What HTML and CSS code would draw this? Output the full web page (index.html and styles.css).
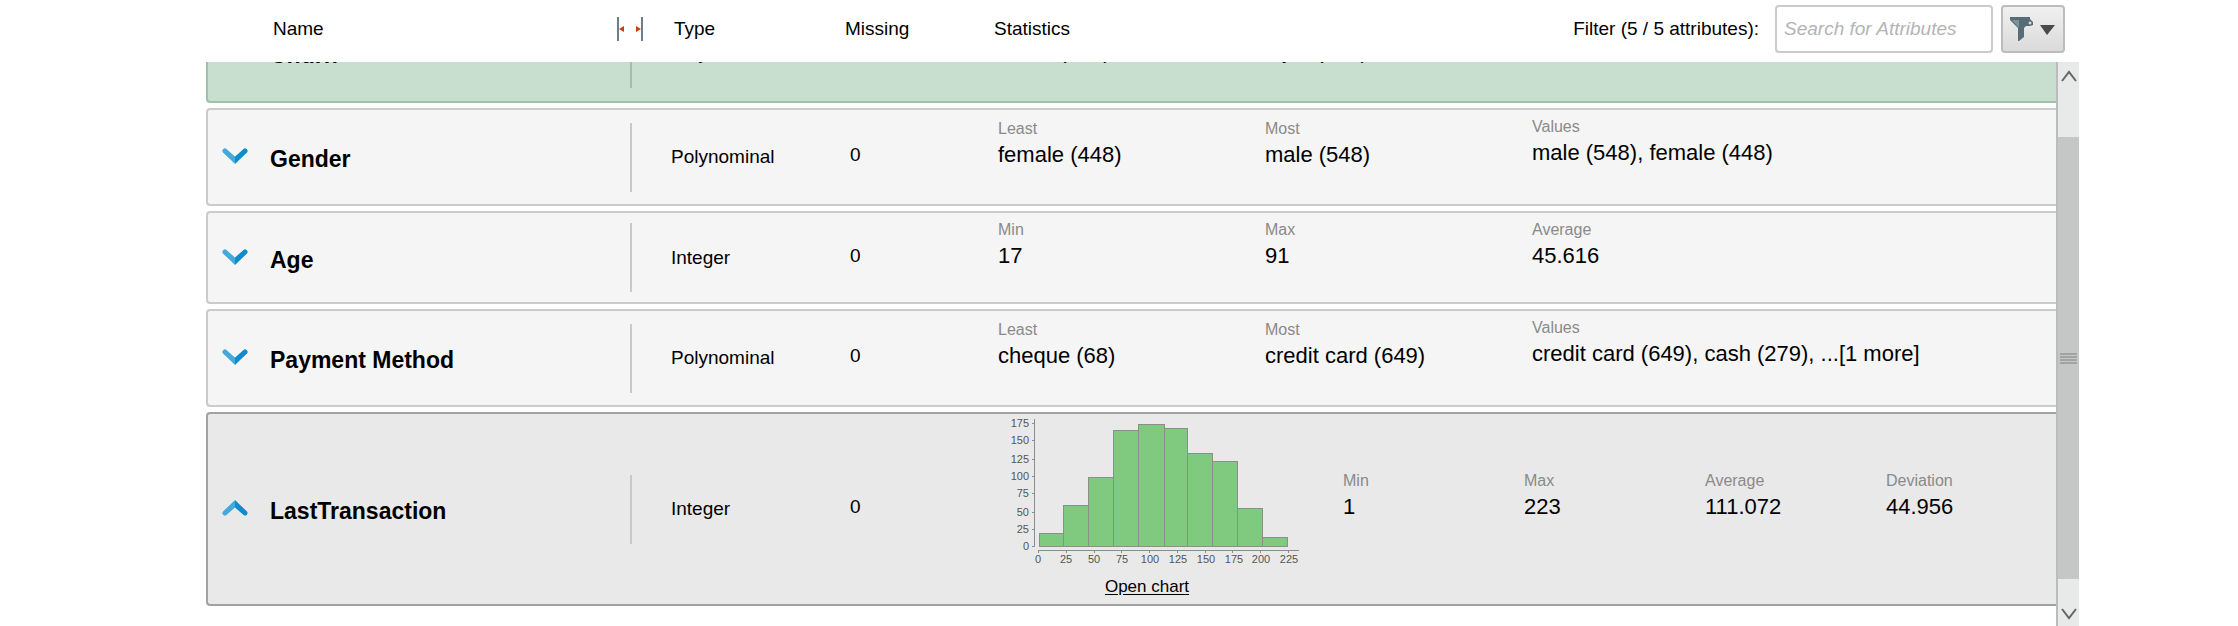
FILE: index.html
```
<!DOCTYPE html>
<html lang="en">
<head>
<meta charset="utf-8">
<title>Attribute statistics</title>
<link rel="stylesheet" href="styles.css">
</head>
<body>
<svg class="defs" aria-hidden="true">
  <symbol id="chevron" viewBox="0 0 26 18">
    <path d="M3 4L13 13" stroke="#45aadb" stroke-width="5" stroke-linecap="round" fill="none"/>
    <path d="M23 4L13 13" stroke="#0e8ccb" stroke-width="5" stroke-linecap="round" fill="none"/>
    <path d="M1 5L4 2L13 10V17Z" fill="#45aadb"/>
    <path d="M25 5L22 2L13 10V17Z" fill="#0e8ccb"/>
  </symbol>
</svg>
<main class="panel">
  <table class="attributes">
    <thead class="head">
      <tr class="head-row">
        <th class="head-name" scope="col">Name
          <svg class="resize" width="26" height="24" viewBox="0 0 26 24" aria-hidden="true">
            <path d="M1 0V24M25 0V24" stroke="#6b7f8a" stroke-width="2"/>
            <path d="M2 12L7 9V15ZM24 12L19 9V15Z" fill="#cc3d14"/>
          </svg>
        </th>
        <th scope="col">Type</th>
        <th scope="col">Missing</th>
        <th scope="col">Statistics</th>
        <td class="filter">
          <label for="search">Filter (5 / 5 attributes):</label>
          <input class="search" id="search" type="text" placeholder="Search for Attributes">
          <button class="filter-button" type="button" aria-label="Filter options">
            <svg width="46" height="26" viewBox="0 0 46 26" aria-hidden="true">
              <path d="M0 1H20V3L23 6V9L20 10H16L14 12V21L9 25H8V12L0 4Z" fill="#566d78"/>
              <path d="M2 4H9V12Z" fill="#7d939d"/>
              <circle cx="20" cy="7" r="1" fill="#e6e6e6" stroke="#e6e6e6"/>
              <path d="M30 9H45L37 19Z" fill="#4a4a4a"/>
            </svg>
          </button>
        </td>
      </tr>
    </thead>
    <tbody class="rows">
      <tr class="row row-label">
        <th class="name" scope="row"><button class="toggle" type="button" aria-label="Expand Churn"><svg class="chevron"><use href="#chevron"/></svg></button>Churn</th>
        <td class="type">Polynominal</td>
        <td class="missing">0</td>
        <td class="stats">
          <dl class="stat"><dt>Least</dt><dd>churn (322)</dd></dl>
          <dl class="stat"><dt>Most</dt><dd>loyal (674)</dd></dl>
          <dl class="stat stat-values"><dt>Values</dt><dd>loyal (674), churn (322)</dd></dl>
        </td>
      </tr>
      <tr class="row">
        <th class="name" scope="row"><button class="toggle" type="button" aria-label="Expand Gender"><svg class="chevron"><use href="#chevron"/></svg></button>Gender</th>
        <td class="type">Polynominal</td>
        <td class="missing">0</td>
        <td class="stats">
          <dl class="stat"><dt>Least</dt><dd>female (448)</dd></dl>
          <dl class="stat"><dt>Most</dt><dd>male (548)</dd></dl>
          <dl class="stat stat-values"><dt>Values</dt><dd>male (548), female (448)</dd></dl>
        </td>
      </tr>
      <tr class="row row-numeric">
        <th class="name" scope="row"><button class="toggle" type="button" aria-label="Expand Age"><svg class="chevron"><use href="#chevron"/></svg></button>Age</th>
        <td class="type">Integer</td>
        <td class="missing">0</td>
        <td class="stats">
          <dl class="stat"><dt>Min</dt><dd>17</dd></dl>
          <dl class="stat"><dt>Max</dt><dd>91</dd></dl>
          <dl class="stat"><dt>Average</dt><dd>45.616</dd></dl>
        </td>
      </tr>
      <tr class="row">
        <th class="name" scope="row"><button class="toggle" type="button" aria-label="Expand Payment Method"><svg class="chevron"><use href="#chevron"/></svg></button>Payment Method</th>
        <td class="type">Polynominal</td>
        <td class="missing">0</td>
        <td class="stats">
          <dl class="stat"><dt>Least</dt><dd>cheque (68)</dd></dl>
          <dl class="stat"><dt>Most</dt><dd>credit card (649)</dd></dl>
          <dl class="stat stat-values"><dt>Values</dt><dd>credit card (649), cash (279), ...[1 more]</dd></dl>
        </td>
      </tr>
      <tr class="row row-open">
        <th class="name" scope="row"><button class="toggle" type="button" aria-label="Collapse LastTransaction"><svg class="chevron chevron-up"><use href="#chevron"/></svg></button>LastTransaction</th>
        <td class="type">Integer</td>
        <td class="missing">0</td>
        <td class="stats stats-open">
          <figure class="chart">
            <svg class="histogram" width="304" height="154" viewBox="0 0 304 154" role="img" aria-label="Histogram of LastTransaction">
              <g fill="#7fca7f" stroke="#8a8f8a" stroke-width="1">
                <rect x="41" y="119" width="24" height="13"/>
                <rect x="65" y="91" width="25" height="41"/>
                <rect x="90" y="63" width="25" height="69"/>
                <rect x="115" y="16" width="25" height="116"/>
                <rect x="140" y="10" width="26" height="122"/>
                <rect x="166" y="14" width="23" height="118"/>
                <rect x="189" y="39" width="25" height="93"/>
                <rect x="214" y="47" width="25" height="85"/>
                <rect x="239" y="94" width="25" height="38"/>
                <rect x="264" y="123" width="25" height="9"/>
              </g>
              <path d="M36 5V133M34 9H36M34 26H36M34 45H36M34 62H36M34 79H36M34 98H36M34 115H36M34 132H36M40 136H301M40 136V139M68 136V139M96 136V139M123 136V139M151 136V139M179 136V139M207 136V139M234 136V139M262 136V139M290 136V139" fill="none" stroke="#8c8c8c" stroke-width="1"/>
              <g class="axis-y">
                <text x="31" y="13">175</text><text x="31" y="30">150</text><text x="31" y="49">125</text><text x="31" y="66">100</text>
                <text x="31" y="83">75</text><text x="31" y="102">50</text><text x="31" y="119">25</text><text x="31" y="136">0</text>
              </g>
              <g class="axis-x">
                <text x="40" y="149">0</text><text x="68" y="149">25</text><text x="96" y="149">50</text><text x="124" y="149">75</text><text x="152" y="149">100</text>
                <text x="180" y="149">125</text><text x="208" y="149">150</text><text x="236" y="149">175</text><text x="263" y="149">200</text><text x="291" y="149">225</text>
              </g>
            </svg>
            <figcaption><a class="open-chart" href="#chart">Open chart</a></figcaption>
          </figure>
          <dl class="stat"><dt>Min</dt><dd>1</dd></dl>
          <dl class="stat"><dt>Max</dt><dd>223</dd></dl>
          <dl class="stat"><dt>Average</dt><dd>111.072</dd></dl>
          <dl class="stat"><dt>Deviation</dt><dd>44.956</dd></dl>
        </td>
      </tr>
    </tbody>
  </table>
  <div class="scrollbar">
    <button class="scroll-arrow" type="button" aria-label="Scroll up"><svg width="16" height="12" viewBox="0 0 16 12"><path d="M1 11L8 2L15 11" fill="none" stroke="#666" stroke-width="2"/></svg></button>
    <div class="thumb"><span class="grip"></span></div>
    <button class="scroll-arrow" type="button" aria-label="Scroll down"><svg width="16" height="12" viewBox="0 0 16 12"><path d="M1 1L8 10L15 1" fill="none" stroke="#666" stroke-width="2"/></svg></button>
  </div>
</main>
</body>
</html>
```
FILE: styles.css
```
* { box-sizing: border-box; }
body {
  margin: 0;
  background: #fff;
  color: #000;
  font: 19px/24px "Liberation Sans", Arial, sans-serif;
}
.defs { display: none; }
.panel {
  display: grid;
  grid-template: 62px minmax(0, 1fr) / minmax(0, 1fr) 23px;
  height: 100vh;
  padding: 0 159px 0 206px;
}
.attributes { display: contents; }
th, td { padding: 0; text-align: left; font-weight: normal; }
button { margin: 0; padding: 0; border: 0; background: none; font: inherit; }

/* Column headings and filter */
.head { display: block; grid-column: 1 / 3; padding: 0 14px 0 67px; }
.head-row {
  display: grid;
  grid-template-columns: 401px 171px 149px 1fr auto;
  align-items: center;
  height: 57px;
}
.head-name { display: flex; align-items: center; justify-content: space-between; padding-right: 31px; }
.filter { display: flex; align-items: center; gap: 8px; }
.filter label { padding-right: 8px; }
.search {
  width: 218px;
  height: 48px;
  padding: 0 7px;
  border: 2px solid #cacaca;
  border-radius: 4px;
  background: #fff;
  font: inherit;
}
.search::placeholder { color: #b4b4b4; font-style: italic; opacity: 1; }
.filter-button {
  display: flex;
  align-items: center;
  justify-content: center;
  width: 64px;
  height: 48px;
  border: 2px solid #bcbcbc;
  border-radius: 4px;
  background: linear-gradient(#f0f0f0, #dadada);
}

/* Attribute rows, scrolled part-way down the list */
.rows {
  display: flex;
  flex-direction: column;
  gap: 5px;
  min-height: 0;
  overflow: hidden;
}
.row {
  display: grid;
  flex: none;
  grid-template-columns: 422px 220px 148px 1fr;
  align-items: center;
  min-height: 98px;
  border: 2px solid #cbcbcb;
  border-right: 0;
  border-radius: 4px 0 0 4px;
  background: #f5f5f5;
}
.row-label { min-height: 100px; margin-top: -59px; border-color: #a0c0a9; background: #c8dfcf; }
.row-numeric { min-height: 93px; }
.row-open { border-color: #a2a2a2; background: #e9e9e9; }
.name { display: flex; align-items: center; font-size: 23px; font-weight: bold; padding-top: 4px; }
.toggle { display: flex; width: 62px; padding: 0 0 6px 14px; }
.chevron { width: 26px; height: 18px; }
.chevron-up { transform: scaleY(-1); }
.type {
  display: flex;
  align-items: center;
  height: 69px;
  padding-left: 39px;
  border-left: 2px solid #c8c8c8;
}
.row-label .type { border-color: #a0c0a9; }
.missing { padding-bottom: 4px; }
.stats { display: grid; grid-template-columns: 267px 267px 1fr; align-items: center; }
.stats-open { grid-template-columns: 345px 181px 181px 181px 1fr; }
.stat { margin: 0; padding-bottom: 24px; white-space: nowrap; }
.stat-values { padding-bottom: 28px; }
.stat dt { color: #8a8a8a; font-size: 16px; line-height: 20px; }
.stat dd { margin: 0; font-size: 22px; line-height: 32px; }

.chart { width: 298px; margin: 0; text-align: center; }
.histogram { display: block; font-size: 11px; fill: #555; shape-rendering: crispEdges; }
.axis-y { text-anchor: end; }
.axis-x { text-anchor: middle; }
.chart figcaption { line-height: 35px; }
.open-chart { color: #000; font-size: 17px; text-underline-offset: 2px; }

.scrollbar {
  display: flex;
  flex-direction: column;
  border-left: 2px solid #bcbcbc;
  background: #e8eaea;
}
.scroll-arrow { display: flex; align-items: center; justify-content: center; height: 28px; }
.scroll-arrow:last-child { height: 24px; }
.thumb {
  display: flex;
  flex: 1;
  align-items: center;
  justify-content: center;
  margin: 47px 0 23px;
  background: #c5c7c6;
}
.grip { width: 17px; height: 11px; background: repeating-linear-gradient(#a2a4a3 0 2px, #c5c7c6 2px 3px); }
```
